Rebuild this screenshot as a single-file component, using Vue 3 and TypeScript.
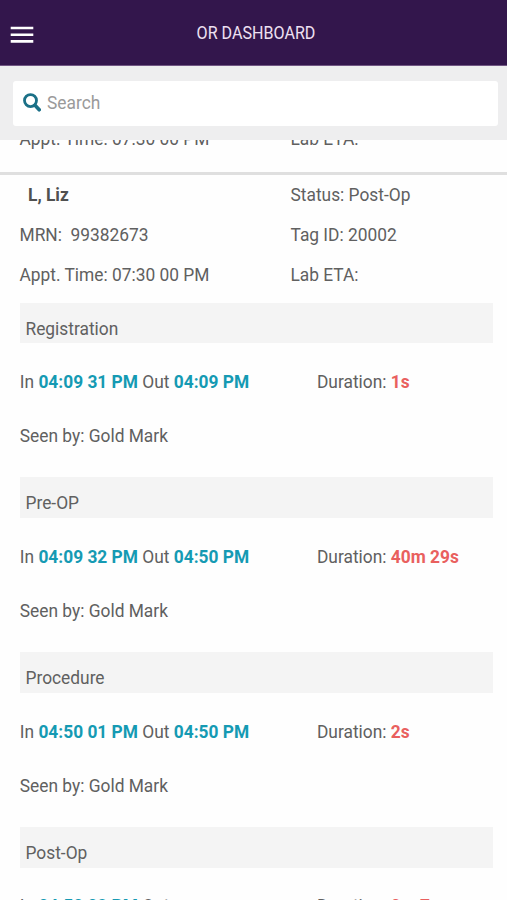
<script setup lang="ts">
interface Stage {
  name: string
  timeIn: string
  timeOut: string
  duration: string
  seenBy: string
}

const stages: Stage[] = [
  { name: 'Registration', timeIn: '04:09 31 PM', timeOut: '04:09 PM', duration: '1s', seenBy: 'Gold Mark' },
  { name: 'Pre-OP', timeIn: '04:09 32 PM', timeOut: '04:50 PM', duration: '40m 29s', seenBy: 'Gold Mark' },
  { name: 'Procedure', timeIn: '04:50 01 PM', timeOut: '04:50 PM', duration: '2s', seenBy: 'Gold Mark' },
  { name: 'Post-Op', timeIn: '04:50 03 PM', timeOut: '', duration: '0m 7s', seenBy: 'Gold Mark' },
]
</script>

<template>
  <div class="screen">
    <header class="topbar">
      <button class="menu" aria-label="Menu">
        <svg width="24" height="18" viewBox="0 0 24 18">
          <path d="M.7 2h22.6M.7 8.8h22.6M.7 15.4h22.6" stroke="#fff" stroke-width="2.6" />
        </svg>
      </button>
      <h1><span class="t">OR DASHBOARD</span></h1>
    </header>

    <div class="searchbar">
      <label class="field">
        <svg class="glass" width="18" height="19" viewBox="0 0 18 19">
          <circle cx="7.5" cy="7.6" r="6" fill="none" stroke="#1b7087" stroke-width="2.8" />
          <path d="M12 12.3l4.2 4.5" stroke="#1b7087" stroke-width="3.6" stroke-linecap="round" />
        </svg>
        <span class="t">Search</span>
      </label>
    </div>

    <main class="list">
      <section class="previous">
        <div class="row"><span class="t">Appt. Time: 07:30 00 PM</span><span class="t">Lab ETA:</span></div>
      </section>

      <section class="patient">
        <div class="row"><b class="t name">L, Liz</b><span class="t">Status: Post-Op</span></div>
        <div class="row"><span class="t">MRN:&nbsp; 99382673</span><span class="t">Tag ID: 20002</span></div>
        <div class="row"><span class="t">Appt. Time: 07:30 00 PM</span><span class="t">Lab ETA:</span></div>
      </section>

      <section v-for="s in stages" :key="s.name" class="stage">
        <h2><span class="t">{{ s.name }}</span></h2>
        <div class="times">
          <span class="t">In <b class="time">{{ s.timeIn }}</b> Out <b class="time">{{ s.timeOut }}</b></span>
          <span class="t">Duration: <b class="duration">{{ s.duration }}</b></span>
        </div>
        <div class="seen"><span class="t">Seen by: {{ s.seenBy }}</span></div>
      </section>
    </main>
  </div>
</template>

<style>
body {
  margin: 0;
  overflow: hidden;
}
</style>

<style scoped>
.screen {
  display: flex;
  flex-direction: column;
  width: 507px;
  height: 900px;
  overflow: hidden;
  background: #fefefe;
  color: #606060;
  font: 17.35px/24px Roboto, sans-serif;
}

.t {
  display: inline-block;
  white-space: pre;
  transform: scaleY(1.09);
  transform-origin: 0 75%;
}

.topbar {
  flex: none;
  display: grid;
  grid-template-columns: 44px 1fr 39px;
  align-items: center;
  box-sizing: border-box;
  height: 66px;
  border-bottom: 1px solid #715683;
  background: #33164c;
}

.menu {
  display: flex;
  padding: 4px 0 0 10px;
  border: 0;
  background: none;
}

h1 {
  margin: 0;
  padding-top: 2px;
  color: #eee0f2;
  font-size: 16.1px;
  font-weight: 400;
  text-align: center;
}

.searchbar {
  flex: none;
  box-sizing: border-box;
  height: 74px;
  padding: 15px 9px 14px 13px;
  background: #eeeeef;
}

.field {
  display: flex;
  align-items: center;
  gap: 6px;
  box-sizing: border-box;
  height: 45px;
  padding: 0 0 2px 10px;
  border-radius: 3px;
  background: #fff;
  color: #9a9a9a;
}

.list {
  flex: 1;
  min-height: 0;
  overflow: hidden;
}

.row {
  display: grid;
  grid-template-columns: 271px 1fr;
  align-items: center;
  height: 40.2px;
  padding-left: 19.5px;
}

.previous {
  display: flex;
  align-items: flex-end;
  height: 32px;
  border-bottom: 3px solid #dfdfdf;
}

.previous .row {
  margin-bottom: 13px;
}

.patient {
  height: 127.5px;
}

.name {
  padding-left: 8.5px;
  color: #505050;
}

b {
  font-weight: 700;
}

.stage {
  height: 174.9px;
  padding: 0 14.5px 0 19.8px;
}

h2 {
  box-sizing: border-box;
  height: 40.5px;
  margin: 0;
  padding: 14px 0 0 5.7px;
  background: #f4f4f4;
  font-size: inherit;
  font-weight: 400;
}

.times {
  display: grid;
  grid-template-columns: 297.2px 1fr;
  padding-top: 27px;
}

.stage:last-child .times {
  padding-top: 26px;
}

.seen {
  padding-top: 30px;
}

.time {
  color: #159ab3;
}

.duration {
  color: #e9605e;
}
</style>
